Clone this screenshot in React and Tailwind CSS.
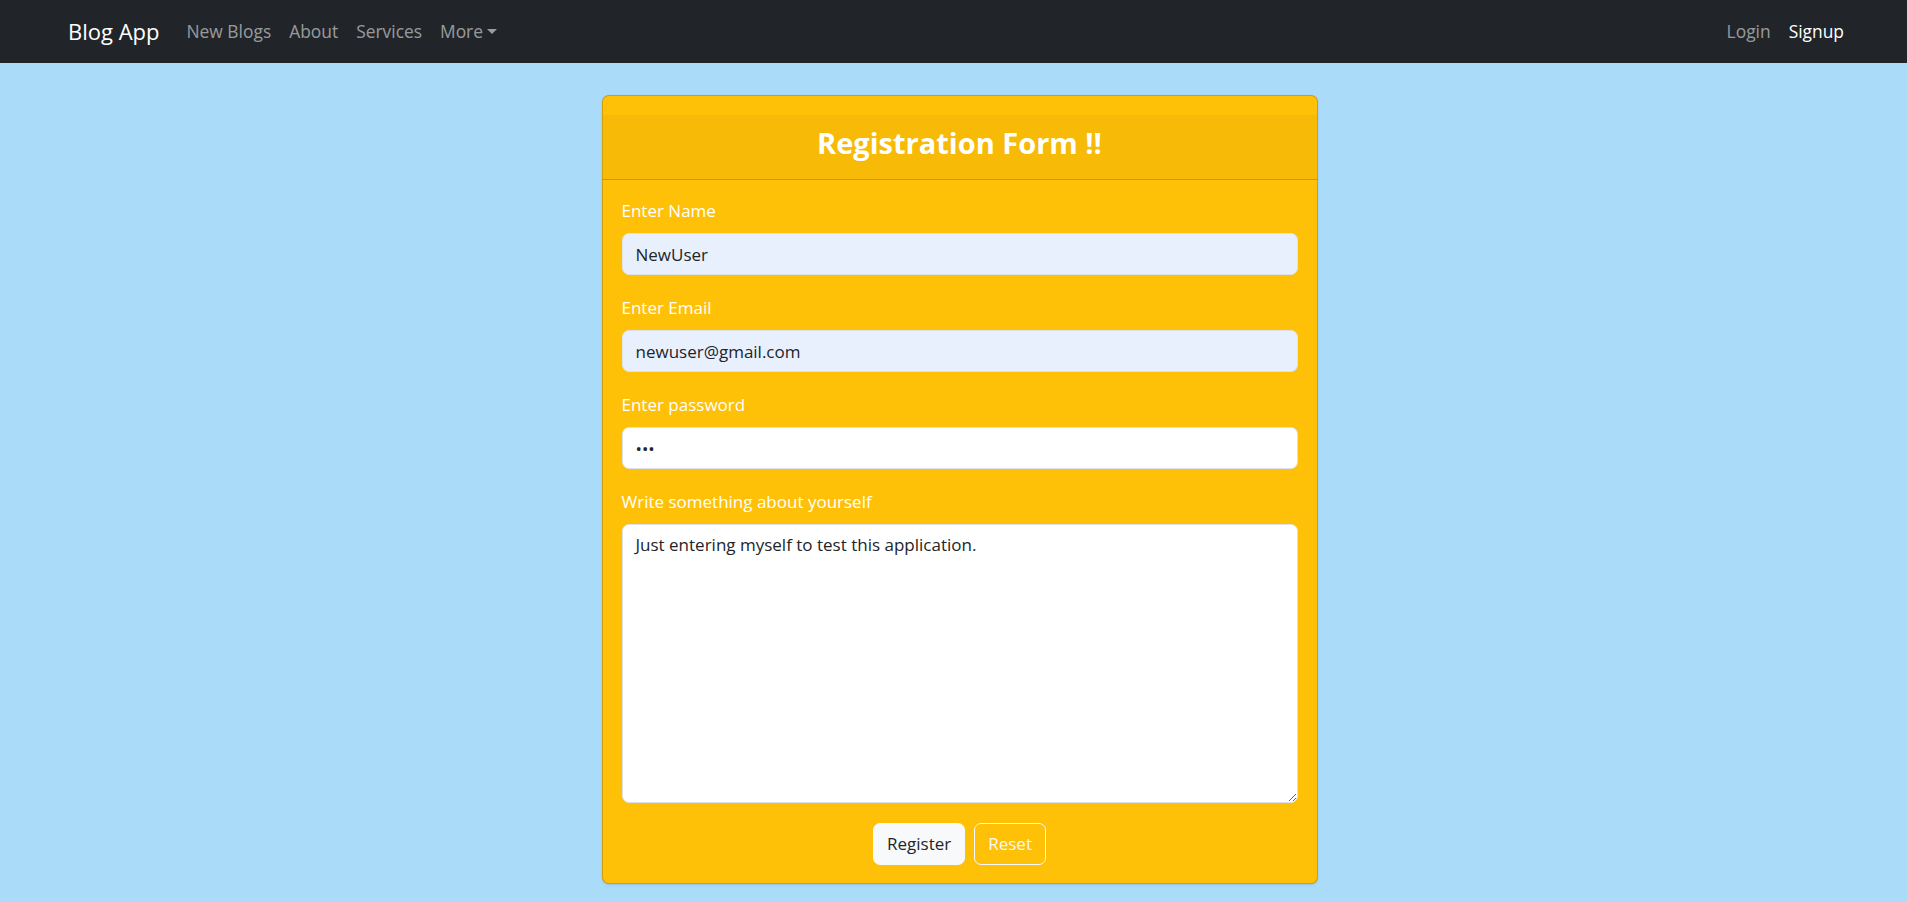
import React from "react";

const font = { fontFamily: '"Open Sans", "Noto Sans", sans-serif' };

const Field = ({ label, children }) => (
  <div className="mb-[20px]">
    <label className="block text-white text-[17px] leading-[26px] mb-[9px]">{label}</label>
    {children}
  </div>
);

const inputCls =
  "block w-full h-[42px] px-[13px] rounded-[7px] border border-[#dee2e6] text-[17px] text-[#212529] outline-none";

const navLink = "px-[9px] text-[17.4px] text-[rgba(255,255,255,0.55)]";

export default function App() {
  return (
    <div className="min-h-screen bg-[#aadcfa]" style={font}>
      {/* Navbar */}
      <nav className="h-[63px] bg-[#212529] flex items-center justify-between pl-[68px] pr-[54px]">
        <div className="flex items-center">
          <span className="text-white text-[22px] mr-[18px]">Blog App</span>
          <a className={navLink}>New Blogs</a>
          <a className={navLink}>About</a>
          <a className={navLink}>Services</a>
          <a className={`${navLink} flex items-center`}>
            More
            <span className="ml-[4px] inline-block w-0 h-0 border-l-[5px] border-r-[5px] border-t-[5px] border-l-transparent border-r-transparent border-t-[rgba(255,255,255,0.55)]" />
          </a>
        </div>
        <div className="flex items-center">
          <a className={navLink}>Login</a>
          <a className="px-[9px] text-[17.4px] text-white">Signup</a>
        </div>
      </nav>

      {/* Main */}
      <main className="flex justify-center pt-[32px] pl-[12px]">
        <div className="w-[716px] bg-[#ffc107] border border-[rgba(0,0,0,0.175)] rounded-[7px] pt-[19px] shadow-sm">
          {/* Header */}
          <div className="bg-[rgba(0,0,0,0.03)] border-b border-[rgba(0,0,0,0.175)] pt-[9px] pb-[9px] text-center">
            <h3 className="text-white text-[29px] font-bold leading-[37px] mb-[9px]">Registration Form !!</h3>
          </div>

          {/* Body */}
          <div className="px-[19px] pt-[18px] pb-[18px]">
            <Field label="Enter Name">
              <input className={`${inputCls} bg-[#e8f0fe]`} defaultValue="NewUser" readOnly />
            </Field>
            <Field label="Enter Email">
              <input className={`${inputCls} bg-[#e8f0fe]`} defaultValue="newuser@gmail.com" readOnly />
            </Field>
            <Field label="Enter password">
              <input type="password" className={`${inputCls} bg-white`} defaultValue="abc" readOnly />
            </Field>
            <Field label="Write something about yourself">
              <textarea
                className="block w-full h-[279px] px-[13px] py-[7px] rounded-[7px] border border-[#dee2e6] bg-white text-[17px] leading-[26px] text-[#212529] outline-none"
                defaultValue="Just entering myself to test this application."
                readOnly
              />
            </Field>

            <div className="flex justify-center gap-[9px]">
              <button className="h-[42px] px-[13px] rounded-[7px] bg-[#f8f9fa] border border-[#f8f9fa] text-[#212529] text-[17px]">
                Register
              </button>
              <button className="h-[42px] px-[13px] rounded-[7px] border border-[#f8f9fa] text-[#f8f9fa] text-[17px]">
                Reset
              </button>
            </div>
          </div>
        </div>
      </main>
    </div>
  );
}
